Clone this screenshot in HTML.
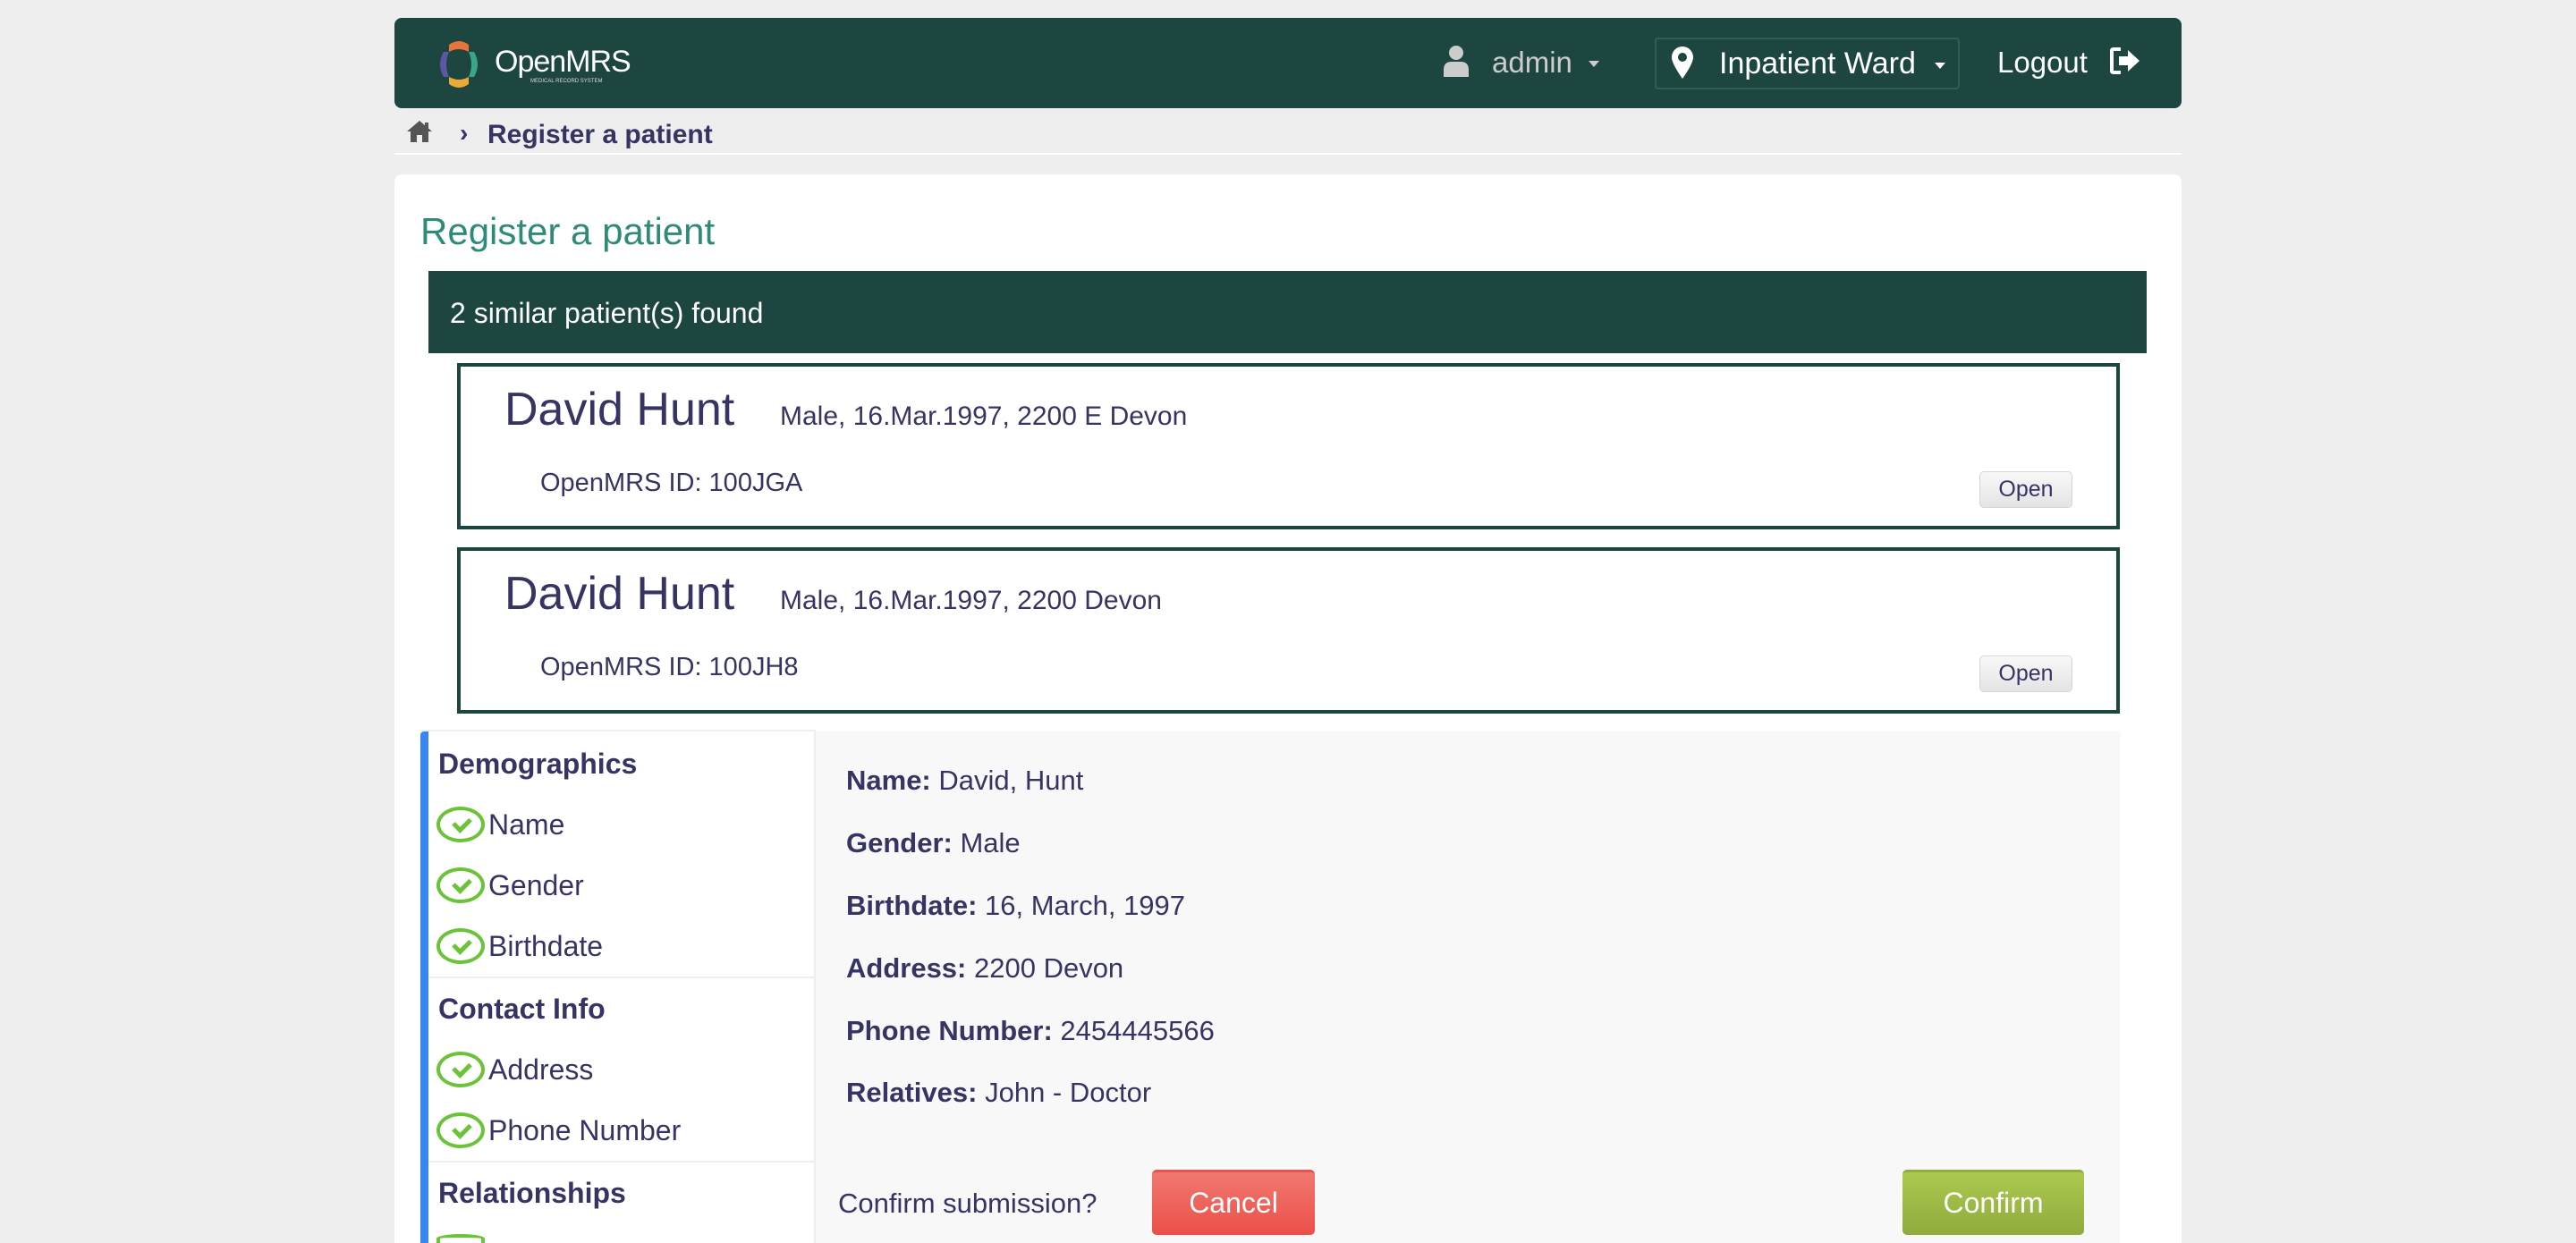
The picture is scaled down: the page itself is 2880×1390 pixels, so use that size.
<!DOCTYPE html>
<html><head><meta charset="utf-8"><style>
*{margin:0;padding:0;box-sizing:border-box}
html,body{width:2880px;height:1390px;overflow:hidden}
body{background:#eeeeee;font-family:"Liberation Sans",sans-serif;color:#363463;position:relative}
.a{position:absolute;white-space:nowrap}
.hdr{left:441px;top:20px;width:1998px;height:101px;background:#1d4641;border-radius:8px}
.card{left:441px;top:195px;width:1998px;height:1195px;background:#fff;border-radius:8px 8px 0 0}
.pc{left:511px;width:1859px;height:186px;border:4px solid #1d4641;background:#fff}
.btn-open{width:104px;height:41px;border:1px solid #d6d6d6;border-radius:5px;background:linear-gradient(#f8f8f8,#e4e4e4);font-size:25px;text-align:center;line-height:39px;color:#363463}
.chk{width:54px;height:40px;border:4px solid #6bc33a;border-radius:50%}
.chk:after{content:"";position:absolute;left:15px;top:8px;width:14px;height:8px;border-left:5px solid #6bc33a;border-bottom:5px solid #6bc33a;transform:rotate(-45deg)}
.nh{font-weight:bold;font-size:32px}
.ni{font-size:32px}
.r{font-size:31px}
.r b{font-weight:bold}
</style></head><body>
<div class="a hdr"></div>
<svg class="a" style="left:488px;top:44px" width="50" height="56" viewBox="0 0 50 56">
<path d="M14 6 Q25 -2 36 6 L36 14 Q25 8 14 14Z" fill="#e8743b"/>
<path d="M14 42 Q25 48 36 42 L36 50 Q25 58 14 50Z" fill="#eaaa3a"/>
<path d="M8 14 Q0 28 8 42 L14 42 Q8 28 14 14Z" fill="#5b57a6"/>
<path d="M42 14 Q50 28 42 42 L36 42 Q42 28 36 14Z" fill="#3aa58b"/>
</svg>
<div class="a" style="left:553px;top:50px;font-size:34px;color:#fff;letter-spacing:-1px">OpenMRS</div>
<div class="a" style="left:593px;top:88px;font-size:6px;color:#ddd">MEDICAL RECORD SYSTEM</div>
<svg class="a" style="left:1613px;top:50px" width="30" height="36" viewBox="0 0 30 36"><circle cx="15" cy="9" r="8" fill="#ccc"/><path d="M1 36 V28 Q1 19 10 19 H20 Q29 19 29 28 V36Z" fill="#ccc"/></svg>
<div class="a" style="left:1668px;top:51px;font-size:33px;color:#ccc">admin</div>
<div class="a" style="left:1776px;top:68px;border:6px solid transparent;border-top:7px solid #ccc"></div>
<div class="a" style="left:1850px;top:42px;width:341px;height:58px;border:2px solid #2d5f55;border-radius:4px"></div>
<svg class="a" style="left:1868px;top:51px" width="26" height="38" viewBox="0 0 26 38"><path d="M13 1 A12 12 0 0 1 25 13 Q25 20 13 37 Q1 20 1 13 A12 12 0 0 1 13 1Z" fill="#fff"/><circle cx="13" cy="13" r="5" fill="#1d4641"/></svg>
<div class="a" style="left:1922px;top:52px;font-size:34px;color:#fff">Inpatient Ward</div>
<div class="a" style="left:2163px;top:70px;border:6px solid transparent;border-top:7px solid #fff"></div>
<div class="a" style="left:2233px;top:51px;font-size:33px;color:#fff">Logout</div>
<svg class="a" style="left:2359px;top:53px" width="34" height="30" viewBox="0 0 34 30"><path d="M12 2 H4 Q2 2 2 4 V26 Q2 28 4 28 H12" fill="none" stroke="#fff" stroke-width="4"/><path d="M10 10 H20 V3 L33 15 L20 27 V20 H10Z" fill="#fff"/></svg>
<svg class="a" style="left:454px;top:134px" width="30" height="26" viewBox="0 0 30 26"><path d="M15 1 L29 13 H25 V25 H18 V17 H12 V25 H5 V13 H1Z" fill="#555"/><rect x="21" y="3" width="4" height="7" fill="#555"/></svg>
<div class="a" style="left:514px;top:133px;font-size:28px;font-weight:bold;color:#363463">›</div>
<div class="a" style="left:545px;top:134px;font-size:30px;font-weight:bold;color:#363463">Register a patient</div>
<div class="a" style="left:441px;top:171px;width:1998px;height:2px;background:#fff"></div>
<div class="a card"></div>
<div class="a" style="left:470px;top:235px;font-size:42px;color:#2e8b78">Register a patient</div>
<div class="a" style="left:479px;top:303px;width:1921px;height:92px;background:#1d4641"></div>
<div class="a" style="left:503px;top:332px;font-size:32px;color:#fff">2 similar patient(s) found</div>
<div class="a pc" style="top:406px"></div>
<div class="a" style="left:564px;top:428px;font-size:52px">David Hunt</div>
<div class="a" style="left:872px;top:449px;font-size:30px">Male, 16.Mar.1997, 2200 E Devon</div>
<div class="a" style="left:604px;top:524px;font-size:29px">OpenMRS ID: 100JGA</div>
<div class="a btn-open" style="left:2213px;top:527px">Open</div>
<div class="a pc" style="top:612px"></div>
<div class="a" style="left:564px;top:634px;font-size:52px">David Hunt</div>
<div class="a" style="left:872px;top:655px;font-size:30px">Male, 16.Mar.1997, 2200 Devon</div>
<div class="a" style="left:604px;top:730px;font-size:29px">OpenMRS ID: 100JH8</div>
<div class="a btn-open" style="left:2213px;top:733px">Open</div>
<div class="a" style="left:470px;top:816px;width:442px;height:574px;border-top:2px solid #eee;border-right:2px solid #eee"></div>
<div class="a" style="left:470px;top:818px;width:9px;height:572px;background:#3a86f0;border-radius:4px 0 0 0"></div>
<div class="a" style="left:479px;top:1092px;width:431px;height:2px;background:#eee"></div>
<div class="a" style="left:479px;top:1298px;width:431px;height:2px;background:#eee"></div>
<div class="a nh" style="left:490px;top:836px">Demographics</div>
<div class="a chk" style="left:488px;top:902px"></div><div class="a ni" style="left:546px;top:904px">Name</div>
<div class="a chk" style="left:488px;top:970px"></div><div class="a ni" style="left:546px;top:972px">Gender</div>
<div class="a chk" style="left:488px;top:1038px"></div><div class="a ni" style="left:546px;top:1040px">Birthdate</div>
<div class="a nh" style="left:490px;top:1110px">Contact Info</div>
<div class="a chk" style="left:488px;top:1176px"></div><div class="a ni" style="left:546px;top:1178px">Address</div>
<div class="a chk" style="left:488px;top:1244px"></div><div class="a ni" style="left:546px;top:1246px">Phone Number</div>
<div class="a nh" style="left:490px;top:1316px">Relationships</div>
<div class="a chk" style="left:488px;top:1380px;height:10px;border-bottom:none;border-radius:50% 50% 0 0"></div>
<div class="a" style="left:912px;top:818px;width:1458px;height:572px;background:#f8f8f8"></div>
<div class="a r" style="left:946px;top:855px"><b>Name:</b> David, Hunt</div>
<div class="a r" style="left:946px;top:925px"><b>Gender:</b> Male</div>
<div class="a r" style="left:946px;top:995px"><b>Birthdate:</b> 16, March, 1997</div>
<div class="a r" style="left:946px;top:1065px"><b>Address:</b> 2200 Devon</div>
<div class="a r" style="left:946px;top:1135px"><b>Phone Number:</b> 2454445566</div>
<div class="a r" style="left:946px;top:1204px"><b>Relatives:</b> John - Doctor</div>
<div class="a" style="left:937px;top:1328px;font-size:31px">Confirm submission?</div>
<div class="a" style="left:1288px;top:1308px;width:182px;height:73px;border-radius:5px;background:linear-gradient(#f07870,#ec5048);border-top:3px solid #e25550;color:#fff;font-size:32px;text-align:center;line-height:68px">Cancel</div>
<div class="a" style="left:2127px;top:1308px;width:203px;height:73px;border-radius:5px;background:linear-gradient(#acc950,#8fab3c);border-top:3px solid #90ad3d;color:#fff;font-size:32px;text-align:center;line-height:68px">Confirm</div>
</body></html>
